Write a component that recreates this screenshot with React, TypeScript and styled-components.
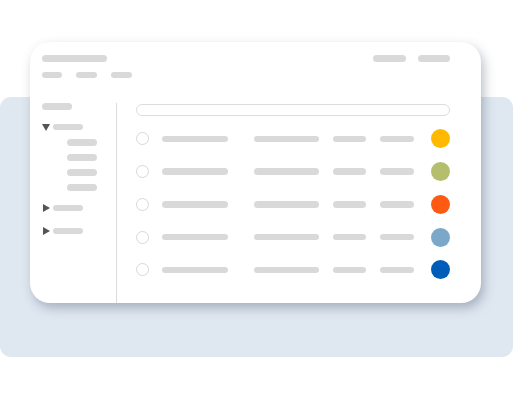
import React from "react";
import styled, { createGlobalStyle } from "styled-components";

const Global = createGlobalStyle`
  html, body { margin: 0; padding: 0; background: #ffffff; }
  body { font-family: "Liberation Sans", Arial, sans-serif; }
`;

const Stage = styled.div`
  position: relative;
  width: 513px;
  height: 400px;
  box-sizing: border-box;
  padding: 42px 32px 0 30px;
  overflow: hidden;
`;

const Backdrop = styled.div`
  position: absolute;
  left: 0;
  top: 97px;
  width: 513px;
  height: 260px;
  border-radius: 11px;
  background: #dfe8f1;
`;

const Card = styled.div`
  position: relative;
  width: 451px;
  height: 261px;
  box-sizing: border-box;
  background: #ffffff;
  border-radius: 20px;
  box-shadow: 3px 5px 11px rgba(55, 70, 95, 0.34);
  padding: 13px 31px 0 12px;
  display: flex;
  flex-direction: column;
`;

const Pill = styled.div<{ $w: number; $h?: number }>`
  width: ${(p) => p.$w}px;
  height: ${(p) => p.$h ?? 7}px;
  border-radius: 4px;
  background: #d9d9d9;
  flex: none;
`;

const HeaderTop = styled.div`
  display: flex;
  align-items: center;
  justify-content: space-between;
`;

const HeaderActions = styled.div`
  display: flex;
  gap: 12px;
`;

const Tabs = styled.div`
  display: flex;
  gap: 14px;
  margin-top: 10px;
`;

const Body = styled.div`
  flex: 1;
  display: flex;
  margin-top: 25px;
`;

const Sidebar = styled.div`
  width: 74px;
  flex: none;
  display: flex;
  flex-direction: column;
`;

const Divider = styled.div`
  width: 1px;
  flex: none;
  background: #dcdcdc;
`;

const TreeNode = styled.div<{ $top: number }>`
  display: flex;
  align-items: center;
  gap: 3px;
  margin-top: ${(p) => p.$top}px;
  height: 7px;
`;

const CaretDown = styled.div`
  width: 0;
  height: 0;
  border-left: 4px solid transparent;
  border-right: 4px solid transparent;
  border-top: 7px solid #555555;
  margin-top: 2px;
  margin-left: -0.5px;
`;

const CaretRight = styled.div`
  width: 0;
  height: 0;
  border-top: 4px solid transparent;
  border-bottom: 4px solid transparent;
  border-left: 7px solid #555555;
  margin-left: 0.5px;
`;

const Children = styled.div`
  display: flex;
  flex-direction: column;
  gap: 8.3px;
  padding-left: 25px;
  margin-top: 9px;
`;

const Main = styled.div`
  flex: 1;
  padding-left: 19px;
  display: flex;
  flex-direction: column;
`;

const Search = styled.div`
  height: 12px;
  box-sizing: border-box;
  margin-top: 1px;
  border: 1.5px solid #dddddd;
  border-radius: 7px;
`;

const List = styled.div`
  display: flex;
  flex-direction: column;
  margin-top: 6.6px;
`;

const Row = styled.div`
  height: 32.75px;
  display: grid;
  grid-template-columns: 26px 92px 79px 47px 51px 19px;
  align-items: center;
`;

const Radio = styled.div`
  width: 13px;
  height: 13px;
  box-sizing: border-box;
  border: 1.5px solid #d8d8d8;
  border-radius: 50%;
`;

const Dot = styled.div<{ $c: string }>`
  width: 19px;
  height: 19px;
  border-radius: 50%;
  background: ${(p) => p.$c};
`;

const colors = ["#ffb900", "#b4be6c", "#ff5a14", "#7ba8c8", "#005cb9"];

export default function App() {
  return (
    <>
      <Global />
      <Stage>
        <Backdrop />
        <Card>
          <HeaderTop>
            <Pill $w={65} />
            <HeaderActions>
              <Pill $w={33} />
              <Pill $w={32} />
            </HeaderActions>
          </HeaderTop>
          <Tabs>
            <Pill $w={20} $h={6} />
            <Pill $w={21} $h={6} />
            <Pill $w={21} $h={6} />
          </Tabs>
          <Body>
            <Sidebar>
              <Pill $w={30} />
              <TreeNode $top={13}>
                <CaretDown />
                <Pill $w={30} $h={6} />
              </TreeNode>
              <Children>
                <Pill $w={30} $h={6.7} />
                <Pill $w={30} $h={6.7} />
                <Pill $w={30} $h={6.7} />
                <Pill $w={30} $h={6.7} />
              </Children>
              <TreeNode $top={14}>
                <CaretRight />
                <Pill $w={30} $h={6} />
              </TreeNode>
              <TreeNode $top={16}>
                <CaretRight />
                <Pill $w={30} $h={6} />
              </TreeNode>
            </Sidebar>
            <Divider />
            <Main>
              <Search />
              <List>
                {colors.map((c) => (
                  <Row key={c}>
                    <Radio />
                    <Pill $w={66} $h={6.5} />
                    <Pill $w={65} $h={6.5} />
                    <Pill $w={33} $h={6.5} />
                    <Pill $w={34} $h={6.5} />
                    <Dot $c={c} />
                  </Row>
                ))}
              </List>
            </Main>
          </Body>
        </Card>
      </Stage>
    </>
  );
}
